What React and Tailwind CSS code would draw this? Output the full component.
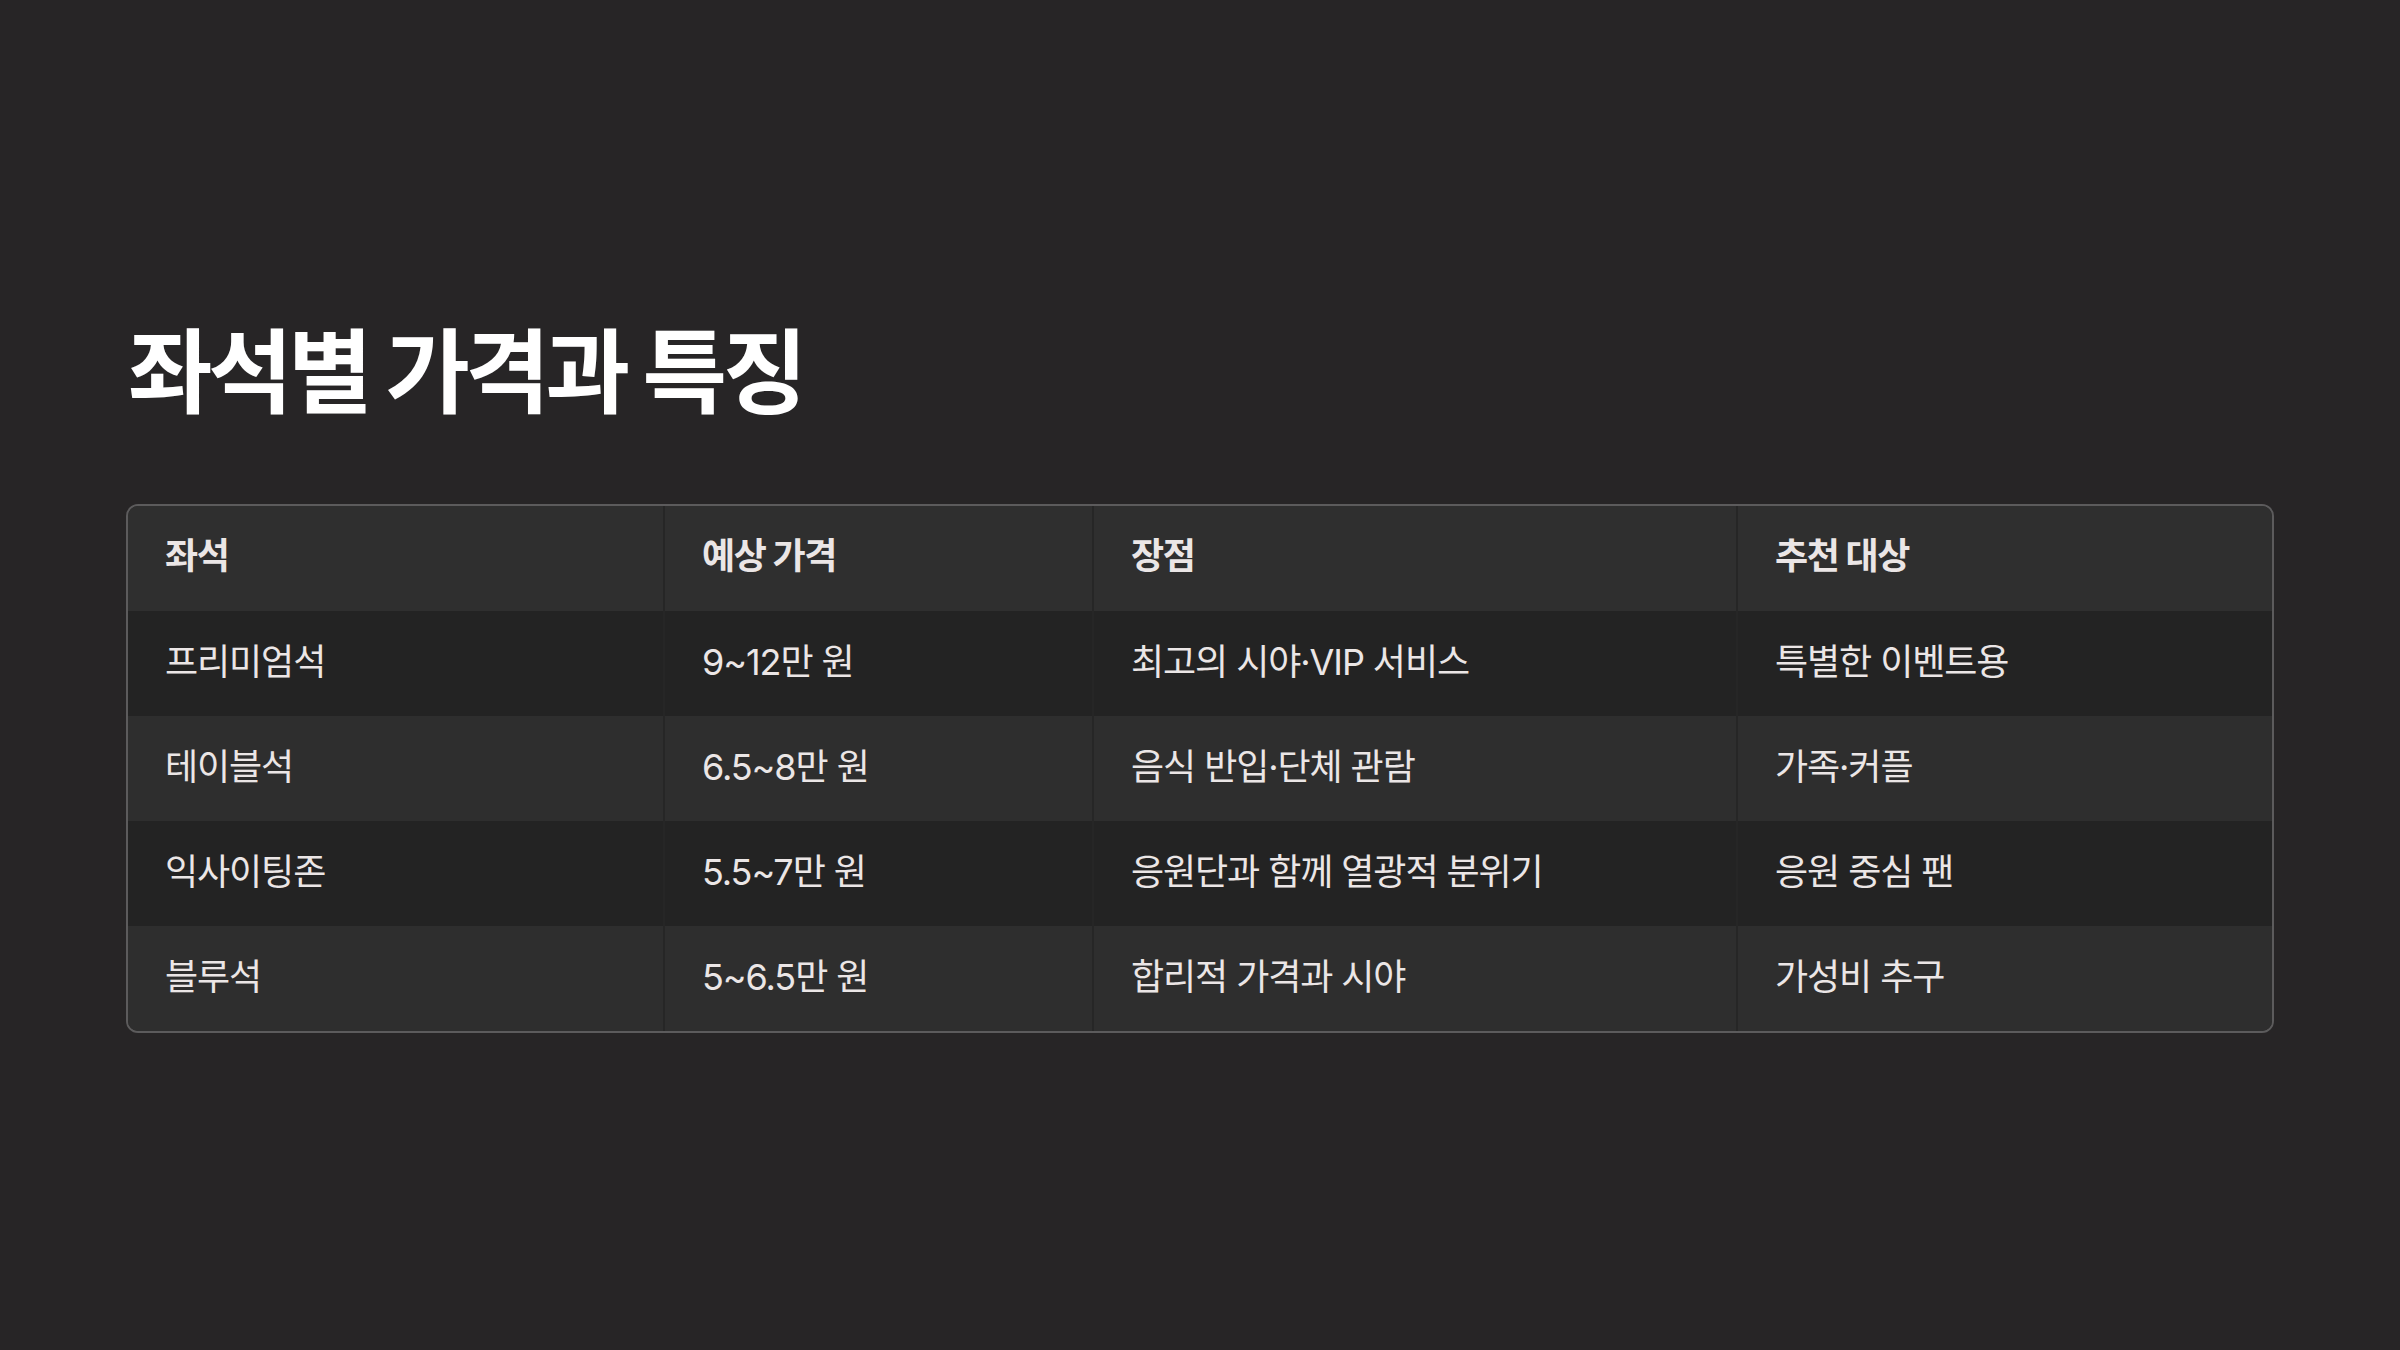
import React from "react";

const rows = [
  ["프리미엄석", "9~12만 원", "최고의 시야·VIP 서비스", "특별한 이벤트용"],
  ["테이블석", "6.5~8만 원", "음식 반입·단체 관람", "가족·커플"],
  ["익사이팅존", "5.5~7만 원", "응원단과 함께 열광적 분위기", "응원 중심 팬"],
  ["블루석", "5~6.5만 원", "합리적 가격과 시야", "가성비 추구"],
];

const headers = ["좌석", "예상 가격", "장점", "추천 대상"];

export default function App() {
  return (
    <div
      className="w-[2400px] h-[1350px] bg-[#272526] px-[126px] pt-[318px]"
      style={{ fontFamily: 'Inter, "Noto Sans CJK KR", "Noto Sans", sans-serif' }}
    >
      <h1 className="text-[92px] leading-[1.2] font-bold text-white tracking-[-0.05em] pl-[2px]">
        좌석별 가격과 특징
      </h1>
      <div className="mt-[76px] border-2 border-[#5c5b5c] rounded-[12px] overflow-hidden">
        <div className="grid grid-cols-[537px_429px_644px_1fr] bg-[#2f2f2f] h-[105px]">
          {headers.map((h, i) => (
            <div
              key={i}
              className={`flex items-center pl-[37px] pb-[5px] text-[36px] font-bold text-[#ebe6e6] tracking-[-0.04em] ${
                i < 3 ? "border-r-2 border-[#262626]" : ""
              }`}
            >
              {h}
            </div>
          ))}
        </div>
        {rows.map((r, ri) => (
          <div
            key={ri}
            className={`grid grid-cols-[537px_429px_644px_1fr] h-[105px] ${
              ri % 2 === 0 ? "bg-[#232323]" : "bg-[#2e2e2e]"
            }`}
          >
            {r.map((c, i) => (
              <div
                key={i}
                className={`flex items-center pl-[37px] pb-[3px] text-[36px] text-[#ebe6e6] tracking-[-0.03em] ${
                  i < 3 ? "border-r-2 border-[#262626]" : ""
                }`}
              >
                {c}
              </div>
            ))}
          </div>
        ))}
      </div>
    </div>
  );
}
